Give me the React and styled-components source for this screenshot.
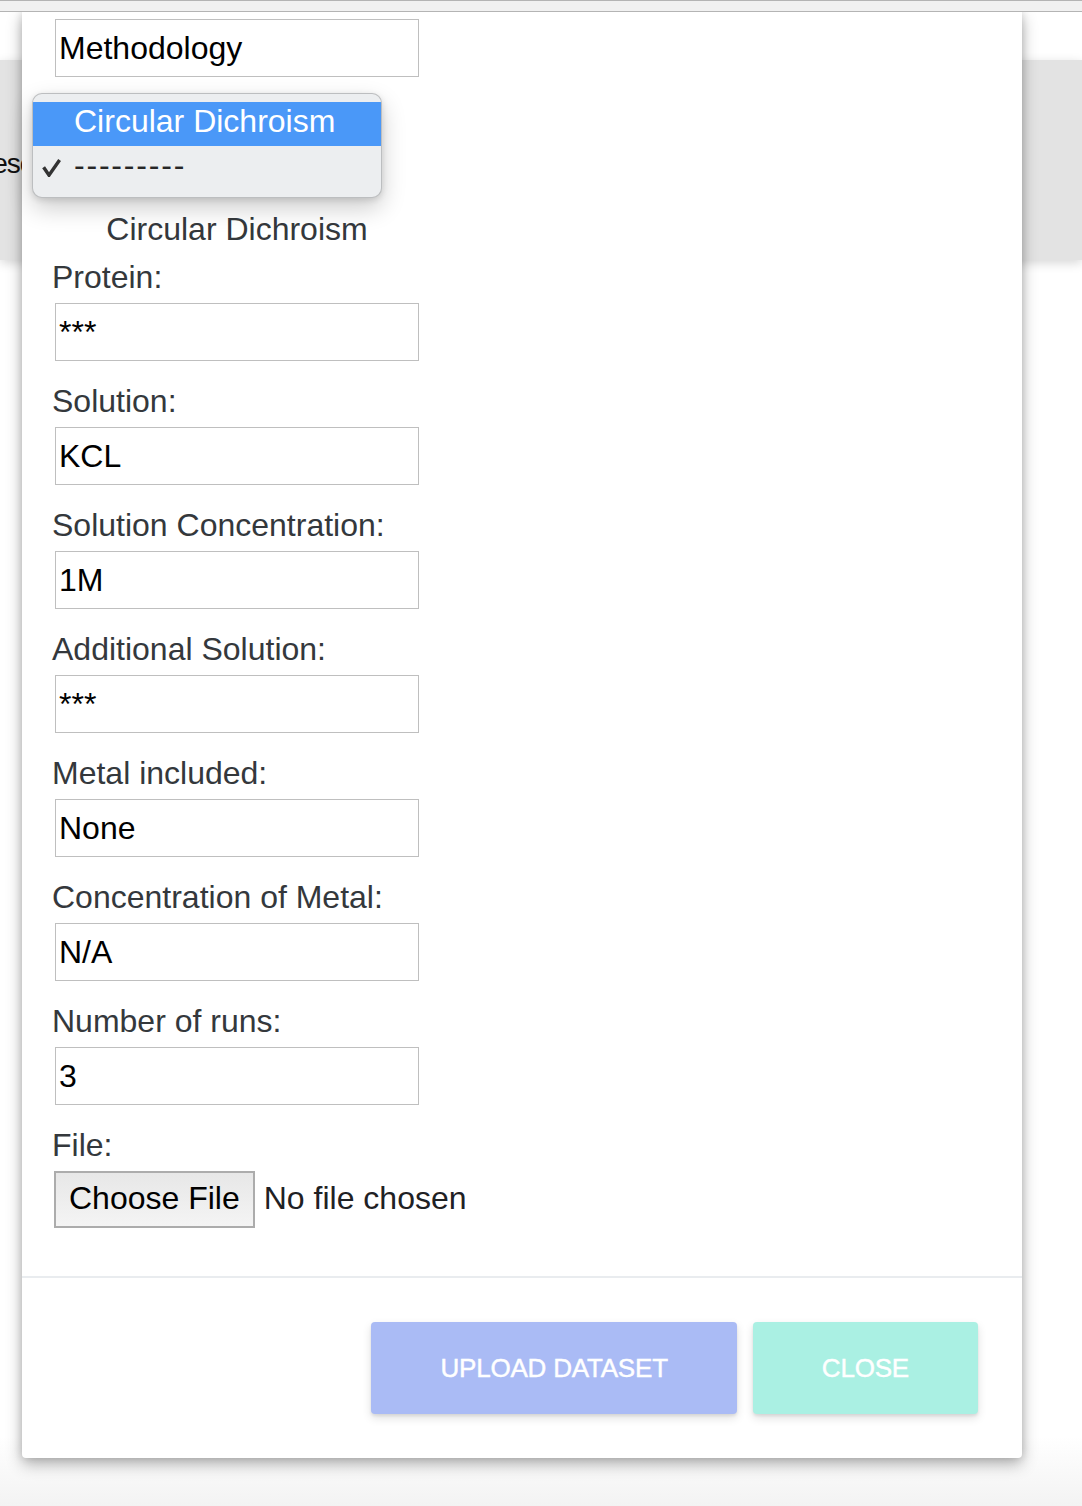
import React from "react";
import styled, { createGlobalStyle } from "styled-components";

const GlobalStyle = createGlobalStyle`
  html, body { margin: 0; padding: 0; background: #ffffff; }
  body { font-family: "Liberation Sans", Arial, sans-serif; overflow: hidden; }
  *, *::before, *::after { box-sizing: border-box; }
`;

const Page = styled.div`
  width: 1082px;
  height: 1506px;
  display: flex;
  flex-direction: column;
  overflow: hidden;
`;

const TopBar = styled.div`
  flex: none;
  height: 12px;
  background: #f1f1f1;
  border-top: 1px solid #b4b4b4;
  border-bottom: 1px solid #b4b4b4;
  position: relative;
  z-index: 3;
`;

const Stage = styled.div`
  position: relative;
  flex: 1;
  display: flex;
  flex-direction: column;
`;

const BackdropTop = styled.div`
  height: 48px;
  background: #ffffff;
`;

const Band = styled.div`
  height: 200px;
  background: #e3e3e3;
  box-shadow: 0 3px 10px rgba(0, 0, 0, 0.16);
  display: flex;
  align-items: center;
  padding-top: 8px;
  position: relative;
  z-index: 1;
`;

const BandText = styled.span`
  font-size: 28px;
  line-height: 40px;
  letter-spacing: -1px;
  color: #111;
  white-space: nowrap;
  margin-left: -27px;
`;

const BackdropRest = styled.div`
  flex: 1;
  background: linear-gradient(to bottom, #ffffff 0, #ffffff calc(100% - 70px), #f3f3f3 100%);
`;

const Modal = styled.div`
  position: absolute;
  top: 0;
  left: 22px;
  width: 1000px;
  background: #ffffff;
  border-radius: 0 0 4px 4px;
  box-shadow: 0 6px 16px rgba(0, 0, 0, 0.3), 0 0 9px rgba(0, 0, 0, 0.14);
  z-index: 2;
`;

const ModalBody = styled.div`
  padding: 7px 32px 32px 32px;
`;

const Label = styled.label`
  display: block;
  font-size: 32px;
  line-height: 48px;
  color: #34383c;
  margin: 0 0 2px -2px;
`;

const TextInput = styled.input`
  display: block;
  width: 364px;
  height: 58px;
  margin: 0 0 16px 1px;
  padding: 0 3px;
  border: 1px solid #bfbfbf;
  border-radius: 0;
  background: #ffffff;
  font-family: "Liberation Sans", Arial, sans-serif;
  font-size: 32px;
  color: #000000;
  outline: none;
`;

const SelectField = styled.div`
  position: relative;
  height: 112px;
  padding-top: 50px;
`;

const SelectBox = styled.div`
  width: 320px;
  height: 48px;
  margin-left: 1px;
  border: 1px solid #bfbfbf;
  border-radius: 6px;
  background: #f7f7f7;
`;

const Popup = styled.div`
  position: absolute;
  top: 0;
  left: -22px;
  width: 350px;
  height: 105px;
  padding: 8px 0 7px;
  background: #eceef0;
  border: 1px solid rgba(0, 0, 0, 0.2);
  border-radius: 10px;
  box-shadow: 0 10px 24px rgba(0, 0, 0, 0.2), 0 2px 6px rgba(0, 0, 0, 0.12);
  overflow: hidden;
  z-index: 4;
`;

const Option = styled.div`
  display: flex;
  align-items: center;
  height: 44px;
  padding-bottom: 6px;
  font-size: 32px;
  white-space: nowrap;
  background: ${(p) => (p.$active ? "#4a98f8" : "transparent")};
  color: ${(p) => (p.$active ? "#ffffff" : "#262626")};
  letter-spacing: ${(p) => (p.$dashes ? "1.8px" : "0")};
`;

const CheckSlot = styled.span`
  flex: none;
  width: 41px;
  padding-left: 9px;
  display: flex;
  align-items: center;
  padding-top: 4px;
`;

const SelectedText = styled.div`
  width: 364px;
  margin-left: 1px;
  text-align: center;
  font-size: 32px;
  line-height: 48px;
  color: #34383c;
`;

const FileRow = styled.div`
  display: flex;
  align-items: center;
  height: 57px;
  margin-bottom: 16px;
`;

const ChooseButton = styled.button`
  height: 57px;
  padding: 0 13px 3px;
  border: 2px solid #acacac;
  border-radius: 0;
  background: linear-gradient(to bottom, #e7e7e7, #f4f4f4);
  font-family: "Liberation Sans", Arial, sans-serif;
  font-size: 32px;
  color: #000000;
`;

const FileStatus = styled.span`
  margin-left: 9px;
  margin-bottom: 3px;
  font-size: 32px;
  color: #1f2124;
`;

const ModalFooter = styled.div`
  border-top: 2px solid #e9ecef;
  padding: 44px;
  display: flex;
  justify-content: flex-end;
  gap: 16px;
`;

const ActionButton = styled.button`
  height: 92px;
  padding: 0 69px;
  border: none;
  border-radius: 4px;
  background: ${(p) => p.$bg};
  color: #ffffff;
  font-family: "Liberation Sans", Arial, sans-serif;
  font-size: 26px;
  letter-spacing: -0.2px;
  -webkit-text-stroke: 0.45px #ffffff;
  text-transform: uppercase;
  box-shadow: 0 4px 10px rgba(0, 0, 0, 0.12), 0 2px 3px rgba(0, 0, 0, 0.08);
`;

const CheckIcon = () => (
  <svg width="19" height="19" viewBox="0 0 19 19" aria-hidden="true">
    <path
      d="M1.6 9.2 L7 17.2 L17.6 2"
      fill="none"
      stroke="#333333"
      strokeWidth="3.4"
      strokeLinejoin="miter"
    />
  </svg>
);

const fields = [
  { label: "Protein:", value: "***" },
  { label: "Solution:", value: "KCL" },
  { label: "Solution Concentration:", value: "1M" },
  { label: "Additional Solution:", value: "***" },
  { label: "Metal included:", value: "None" },
  { label: "Concentration of Metal:", value: "N/A" },
  { label: "Number of runs:", value: "3" },
];

export default function App() {
  return (
    <>
      <GlobalStyle />
      <Page>
        <TopBar />
        <Stage>
          <BackdropTop />
          <Band>
            <BandText>Description</BandText>
          </Band>
          <BackdropRest />
          <Modal>
            <ModalBody>
              <TextInput readOnly value="Methodology" />
              <SelectField>
                <SelectBox />
                <Popup>
                  <Option $active>
                    <CheckSlot />
                    Circular Dichroism
                  </Option>
                  <Option $dashes>
                    <CheckSlot>
                      <CheckIcon />
                    </CheckSlot>
                    ---------
                  </Option>
                </Popup>
              </SelectField>
              <SelectedText>Circular Dichroism</SelectedText>
              {fields.map((f) => (
                <React.Fragment key={f.label}>
                  <Label>{f.label}</Label>
                  <TextInput readOnly value={f.value} />
                </React.Fragment>
              ))}
              <Label>File:</Label>
              <FileRow>
                <ChooseButton>Choose File</ChooseButton>
                <FileStatus>No file chosen</FileStatus>
              </FileRow>
            </ModalBody>
            <ModalFooter>
              <ActionButton $bg="#aabbf5">Upload Dataset</ActionButton>
              <ActionButton $bg="#aaf0e3">Close</ActionButton>
            </ModalFooter>
          </Modal>
        </Stage>
      </Page>
    </>
  );
}
